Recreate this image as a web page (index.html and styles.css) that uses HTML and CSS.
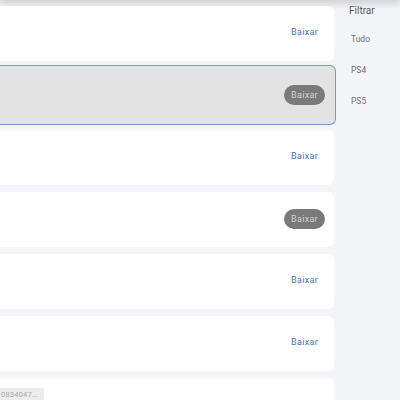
FILE: index.html
```html
<!DOCTYPE html>
<html lang="pt-BR">
<head>
    <meta charset="UTF-8">
    <meta name="viewport" content="width=device-width, initial-scale=1.0">
    <title>Downloads</title>
    <link rel="stylesheet" href="styles.css">
</head>
<body>
    <div class="topbar"></div>

    <div class="page">
        <div class="list">
            <div class="card">
                <a class="download" href="#">Baixar</a>
            </div>

            <div class="card selected">
                <button class="download-btn">Baixar</button>
            </div>

            <div class="card">
                <a class="download" href="#">Baixar</a>
            </div>

            <div class="card">
                <button class="download-btn">Baixar</button>
            </div>

            <div class="card">
                <a class="download" href="#">Baixar</a>
            </div>

            <div class="card">
                <a class="download" href="#">Baixar</a>
            </div>

            <div class="card">
                <span class="code">0834047...</span>
                <a class="download" href="#">Baixar</a>
            </div>
        </div>

        <!-- Filter column on the right -->
        <div class="sidebar">
            <div class="sidebar-title">Filtrar</div>
            <ul class="filters">
                <li>Tudo</li>
                <li>PS4</li>
                <li>PS5</li>
            </ul>
        </div>
    </div>
</body>
</html>
```

FILE: styles.css
```css
body {
    font-family: Roboto, 'Open Sans', sans-serif;
    background-color: #f4f5f8;
    margin: 0;
    padding: 0;
    overflow: hidden;
}

.topbar {
    position: fixed;
    top: -12px;
    left: 0;
    right: 0;
    height: 12px;
    background: #e2e2e2;
    box-shadow: 0 3px 9px rgba(0, 0, 0, 0.18);
}

.page {
    display: flex;
    height: 400px;
}

.list {
    width: 334px;
    padding-top: 6px;
    display: flex;
    flex-direction: column;
    gap: 7px;
}

.card {
    position: relative;
    height: 55px;
    background: #ffffff;
    border-radius: 0 6px 6px 0;
    display: flex;
    align-items: center;
    justify-content: flex-end;
    padding-right: 16px;
    box-sizing: border-box;
    flex-shrink: 0;
}

.card.selected {
    height: 60px;
    margin: -3px -2px -2px 0;
    background: #e3e3e3;
    border: 1px solid #7f97c8;
    border-left: none;
    padding-right: 17px;
}

.download {
    font-size: 9px;
    color: #4a72c2;
    text-decoration: none;
    letter-spacing: 0.3px;
    margin-top: -3px;
}

.download-btn {
    font-family: inherit;
    font-size: 9px;
    color: #d0d0d0;
    background: #7a7a7a;
    border: none;
    border-radius: 10px;
    width: 41px;
    height: 20px;
    padding: 0;
    letter-spacing: 0.3px;
    margin-right: -7px;
    margin-top: -1px;
}

.code {
    position: absolute;
    left: 0;
    top: 10px;
    font-size: 7.5px;
    color: #a8a8a8;
    background: #ececec;
    border-radius: 0 3px 3px 0;
    padding: 2px 6px 2px 1px;
    letter-spacing: 0.2px;
}

.sidebar {
    flex: 1;
    padding-left: 15px;
}

.sidebar-title {
    font-size: 10px;
    line-height: 12px;
    color: #5f5f5f;
    margin-top: 5px;
}

.filters {
    list-style: none;
    margin: 7px 0 0;
    padding: 0 0 0 2px;
}

.filters li {
    font-size: 8.5px;
    color: #707070;
    height: 31px;
    line-height: 31px;
}
```
